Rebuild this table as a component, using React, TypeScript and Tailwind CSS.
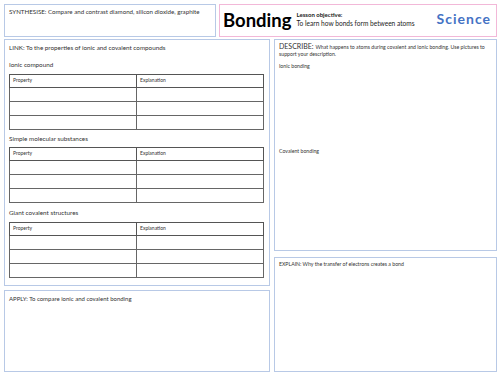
import React from "react";

const font = { fontFamily: "Lato, 'Open Sans', sans-serif" };

function PropTable() {
  return (
    <table className="w-[255px] border-collapse border border-[#555] text-[5px] text-[#333]">
      <tbody>
        <tr className="h-[13px]">
          <td className="w-[127px] border border-[#555] px-[3px] align-middle">Property</td>
          <td className="border border-[#555] px-[3px] align-middle">Explanation</td>
        </tr>
        {[0, 1, 2].map((i) => (
          <tr key={i} className="h-[14px]">
            <td className="border border-[#666]"></td>
            <td className="border border-[#666]"></td>
          </tr>
        ))}
      </tbody>
    </table>
  );
}

export default function App() {
  return (
    <div
      className="w-[500px] h-[375px] bg-white flex flex-col gap-[2px] pt-[4px] pl-[4px] pr-[3px] pb-[3px] text-[#333]"
      style={font}
    >
      {/* header row */}
      <div className="flex gap-[3px] h-[33px]">
        <div className="w-[212px] border border-[#b8c9e6] px-[4px] pt-[3px] text-[6.2px] leading-[8px]">
          SYNTHESISE: Compare and contrast diamond, silicon dioxide, graphite
        </div>
        <div className="flex-1 border border-[#f2b8d8] flex items-center pl-[3px] pr-[5px]">
          <span className="text-[18.5px] font-bold leading-none text-black">Bonding</span>
          <div className="ml-[5px] flex flex-col leading-[9px] -mt-[3px] whitespace-nowrap text-[#222]">
            <span className="text-[6px] font-bold">Lesson objective:</span>
            <span className="text-[6.6px]">To learn how bonds form between atoms</span>
          </div>
          <span className="ml-auto text-[14px] font-bold text-[#4472c4] tracking-[1px] -mt-[4px]">Science</span>
        </div>
      </div>

      {/* body */}
      <div className="flex gap-[4px] flex-1">
        <div className="w-[266px] flex flex-col gap-[4px]">
          <div className="h-[247px] border border-[#b8c9e6] px-[4px] pt-[4px]">
            <p className="text-[6.3px] leading-[8px]">LINK: To the properties of ionic and covalent compounds</p>
            <p className="text-[6.3px] leading-[8px] mt-[9px]">Ionic compound</p>
            <div className="mt-[5px]">
              <PropTable />
            </div>
            <p className="text-[6.3px] leading-[8px] mt-[5px]">Simple molecular substances</p>
            <div className="mt-[4px]">
              <PropTable />
            </div>
            <p className="text-[6.3px] leading-[8px] mt-[6px]">Giant covalent structures</p>
            <div className="mt-[5px]">
              <PropTable />
            </div>
          </div>
          <div className="flex-1 border border-[#b8c9e6] px-[4px] pt-[4px] text-[6px] leading-[8px]">
            APPLY: To compare ionic and covalent bonding
          </div>
        </div>

        <div className="flex-1 flex flex-col gap-[6px]">
          <div className="h-[212px] border border-[#b8c9e6] px-[4px] pt-[2px]">
            <div className="flex items-baseline gap-[2px] whitespace-nowrap leading-[8px]">
              <span className="text-[7px]">DESCRIBE:</span>
              <span className="text-[5.2px]">What happens to atoms during covalent and ionic bonding. Use pictures to</span>
            </div>
            <p className="text-[5.2px] leading-[7px]">support your description.</p>
            <p className="text-[5.2px] leading-[7px] mt-[5px]">Ionic bonding</p>
            <p className="text-[5.2px] leading-[7px] mt-[78px]">Covalent bonding</p>
          </div>
          <div className="flex-1 border border-[#b8c9e6] px-[4px] pt-[3px] text-[5.2px] leading-[7px]">
            EXPLAIN: Why the transfer of electrons creates a bond
          </div>
        </div>
      </div>
    </div>
  );
}
